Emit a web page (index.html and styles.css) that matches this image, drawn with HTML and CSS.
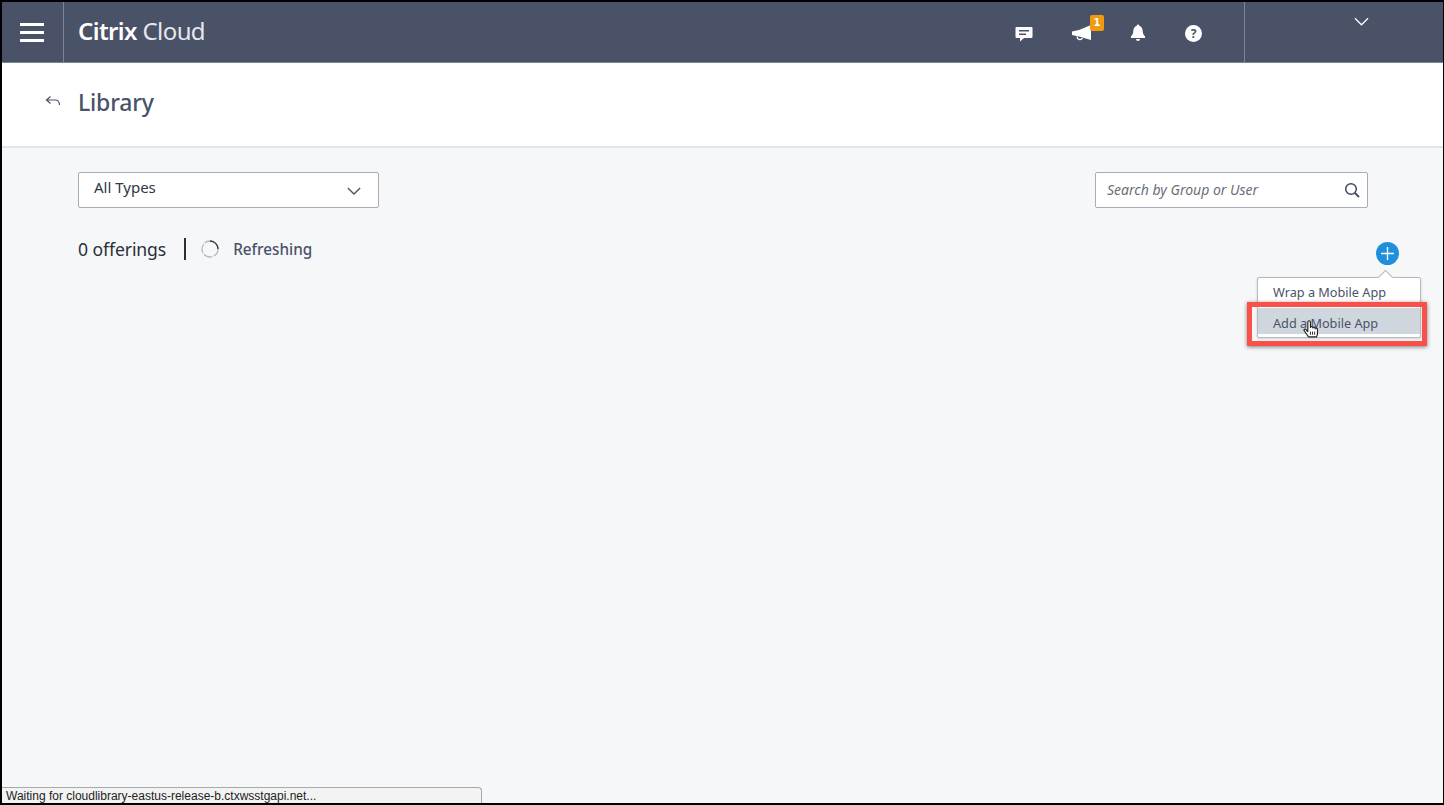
FILE: index.html
```html
<!DOCTYPE html>
<html lang="en">
<head>
<meta charset="utf-8">
<title>Library - Citrix Cloud</title>
<link rel="stylesheet" href="styles.css">
</head>
<body>
<div class="frame">
  <header class="topbar">
    <button class="burger" aria-label="Menu"><span></span><span></span><span></span></button>
    <div class="brand"><b>Citrix</b> Cloud</div>
    <div class="top-icons">
      <svg class="ic ic-chat" viewBox="0 0 18 16"><path fill="#fff" d="M1.500 1h15a1 1 0 0 1 1 1v9a1 1 0 0 1-1 1H9l-4 3.500V12H1.500a1 1 0 0 1-1-1V2a1 1 0 0 1 1-1z"/><path fill="none" stroke="#4a5268" stroke-width="1.600" d="M4 4.800h10M4 8.200h7"/></svg>
      <div class="horn">
        <svg class="ic-horn" viewBox="0 0 21 16"><path fill="#fff" d="M20 0v15L8 11.500 1 10V6.500L8 5z"/><path fill="none" stroke="#fff" stroke-width="1.300" d="M6 11.500a3 3 0 0 0 5.500 1.700"/></svg>
        <span class="badge">1</span>
      </div>
      <svg class="ic ic-bell" viewBox="0 0 16 18"><path fill="#fff" d="M8 .5a1.200 1.200 0 0 1 1.200 1.300C11.500 2.500 12.600 4.500 12.700 7c.1 2.600.8 3.900 2.300 5.200V14H1v-1.800C2.500 10.900 3.200 9.600 3.300 7 3.400 4.500 4.500 2.500 6.800 1.800A1.200 1.200 0 0 1 8 .5z"/><path fill="#fff" d="M6 15h4a2 2 0 0 1-4 0z"/></svg>
      <div class="help">?</div>
    </div>
    <div class="account">
      <svg class="acct-chev" viewBox="0 0 16 9"><path fill="none" stroke="#fff" stroke-width="1.300" d="M1 1l7 7 7-7"/></svg>
    </div>
  </header>

  <section class="titlebar">
    <svg class="back" viewBox="0 0 16 12"><path fill="none" stroke="#4a5268" stroke-width="1.200" d="M5.500 1.500L1.500 5l4 3.500M1.500 5H10c3 0 4.500 1.500 4.500 5"/></svg>
    <h1>Library</h1>
  </section>

  <main class="content">
    <div class="filters">
      <div class="select">
        <span>All Types</span>
        <svg class="chev" viewBox="0 0 16 9"><path fill="none" stroke="#4a5268" stroke-width="1.500" d="M1 1l7 7 7-7"/></svg>
      </div>
      <div class="search">
        <span>Search by Group or User</span>
        <svg class="mag" viewBox="0 0 16 16"><circle cx="7" cy="7" r="5.300" fill="none" stroke="#3d4760" stroke-width="1.500"/><path stroke="#3d4760" stroke-width="1.800" d="M11 11l4 4"/></svg>
      </div>
    </div>
    <div class="status">
      <span class="count">0 offerings</span>
      <span class="sep"></span>
      <svg class="spin" viewBox="0 0 20 20"><circle cx="10" cy="10" r="8" fill="none" stroke="#b5b8bd" stroke-width="1.300" stroke-dasharray="9 1.500"/><path fill="none" stroke="#2f3542" stroke-width="1.300" d="M10 2a8 8 0 0 1 8 8"/></svg>
      <span class="refresh">Refreshing</span>
    </div>
  </main>

  <button class="add" aria-label="Add"><svg viewBox="0 0 14 14"><path stroke="#fff" stroke-width="1.300" d="M7 1v12M1 7h12"/></svg></button>
  <div class="menu">
    <div class="menu-item">Wrap a Mobile App</div>
    <div class="menu-item active">Add a Mobile App</div>
  </div>
  <div class="highlight"></div>
  <svg class="hand" viewBox="0 0 16 20"><path fill="#fff" stroke="#222" stroke-width="1.100" stroke-linejoin="round" d="M5 17c-1-2-3-4-4-6-.6-1.200.8-2 1.700-1L4.500 12V3c0-1.800 2.500-1.800 2.500 0v5c0-1.200 2.300-1.200 2.300 0v.6c0-1.100 2.200-1.100 2.200 0v.8c0-1 2.200-1 2.200.2V14c0 1.500-.6 2.300-1 3z"/><path stroke="#222" stroke-width=".9" d="M7 12v3M9 12v3M11 12v3"/></svg>
  <div class="statusbar">Waiting for cloudlibrary-eastus-release-b.ctxwsstgapi.net...</div>
</div>
</body>
</html>
```

FILE: styles.css
```css
* { box-sizing: border-box; }
html, body { margin: 0; height: 100%; }
body { background: #000; overflow: hidden; font-family: "Noto Sans", "Open Sans", sans-serif; }

.frame {
  position: relative;
  width: 1441px;
  height: 801px;
  margin: 2px 0 0 2px;
  background: #f6f7f9;
  display: flex;
  flex-direction: column;
  overflow: hidden;
}

.topbar {
  height: 61px;
  flex: none;
  background: #4a5268;
  display: flex;
  align-items: stretch;
  color: #fff;
  border-bottom: 1px solid #7d8496;
}
.burger {
  width: 62px;
  flex: none;
  background: none;
  border: 0;
  border-right: 1px solid #7d8496;
  padding: 1px 0 0 18px;
  display: flex;
  flex-direction: column;
  justify-content: center;
  gap: 5px;
}
.burger span { display: block; width: 24px; height: 3px; background: #fff; }
.brand { margin-left: 14px; font-size: 24px; line-height: 58px; font-weight: 400; letter-spacing: -.6px; color: #e6e8ec; }
.brand b { font-weight: 600; color: #fff; }

.top-icons { margin-left: auto; display: flex; align-items: center; padding-top: 3px; }
.ic { display: block; }
.ic-chat { width: 18px; height: 16px; }
.horn { position: relative; width: 21px; height: 16px; margin-left: 38px; top: -1px; }
.ic-horn { display: block; width: 21px; height: 16px; }
.badge {
  position: absolute;
  left: 19px;
  top: -10px;
  width: 14px;
  height: 16px;
  background: #f09a0e;
  border-radius: 2px;
  font: 700 10px/16px "DejaVu Sans", sans-serif;
  text-align: center;
  color: #fff;
}
.ic-bell { width: 16px; height: 18px; margin-left: 38px; position: relative; top: -1px; }
.help {
  width: 17px;
  height: 17px;
  margin-left: 39px;
  border-radius: 50%;
  background: #fff;
  color: #4a5268;
  font: 700 12px/17px "Noto Sans", sans-serif;
  text-align: center;
}
.account {
  width: 199px;
  margin-left: 42px;
  flex: none;
  border-left: 1px solid #7d8496;
  padding: 15px 0 0 109px;
}
.acct-chev { display: block; width: 15px; height: 9px; }

.titlebar {
  height: 85px;
  flex: none;
  background: #fff;
  border-bottom: 2px solid #e3e5e9;
  display: flex;
  align-items: center;
  padding: 0 0 5px 43px;
}
.back { width: 16px; height: 12px; flex: none; margin-top: -2px; }
h1 { margin: 0 0 0 17px; font-size: 23px; font-weight: 500; color: #4a5268; letter-spacing: -.2px; }

.content { flex: 1; padding: 24px 76px 0; }
.filters { display: flex; justify-content: space-between; align-items: flex-start; }
.select, .search {
  height: 36px;
  background: #fff;
  border: 1px solid #a9acb2;
  border-radius: 2px;
  display: flex;
  align-items: center;
  justify-content: space-between;
}
.select { width: 301px; padding: 0 17px 6px 15px; font-size: 15px; color: #2f3542; }
.chev { width: 14px; height: 8px; margin-top: 7px; }
.search { width: 273px; margin-right: -1px; padding: 0 7px 2px 11px; font-size: 14px; font-style: italic; color: #6a6f7a; }
.mag { width: 16px; height: 16px; margin-top: 2px; }

.status { display: flex; align-items: center; margin-top: 29px; height: 24px; }
.count { font-size: 17.600px; color: #2b2f38; letter-spacing: -.1px; }
.sep { width: 2px; height: 22px; background: #2b2f38; margin-left: 18px; }
.spin { width: 20px; height: 20px; margin-left: 14px; }
.refresh { margin-left: 13px; font-size: 15.300px; font-weight: 500; color: #4a5268; }

.add {
  position: absolute;
  left: 1374px;
  top: 240px;
  width: 23px;
  height: 23px;
  padding: 4px;
  border: 0;
  border-radius: 50%;
  background: #1f8fdc;
}
.add svg { display: block; width: 15px; height: 15px; }

.menu {
  position: absolute;
  left: 1255px;
  top: 275px;
  width: 164px;
  height: 61px;
  background: #fff;
  border: 1px solid #b6b9be;
  border-radius: 2px;
  box-shadow: 0 1px 3px rgba(0,0,0,.15);
}
.menu::before {
  content: "";
  position: absolute;
  left: 122px;
  top: -6px;
  width: 10px;
  height: 10px;
  background: #fff;
  border-left: 1px solid #b6b9be;
  border-top: 1px solid #b6b9be;
  transform: rotate(45deg);
}
.menu-item { position: relative; height: 30px; padding-left: 15px; font-size: 12.700px; line-height: 29px; color: #4a5268; }
.menu-item.active { background: #d0d6dd; height: 26px; line-height: 30px; }

.highlight {
  position: absolute;
  left: 1245px;
  top: 300px;
  width: 180px;
  height: 44px;
  border: 5px solid #f9514a;
  box-shadow: 0 1px 4px rgba(0,0,0,.5);
}
.hand { position: absolute; left: 1301px; top: 317px; width: 17px; height: 21px; }

.statusbar {
  position: absolute;
  left: 0;
  bottom: 0;
  width: 480px;
  height: 16px;
  background: #f3f3f3;
  border: 1px solid #a9a9a9;
  border-bottom: 0;
  border-left: 0;
  border-top-right-radius: 4px;
  padding-left: 4px;
  font: 12px/16px "Liberation Sans", sans-serif;
  color: #222;
}
```
